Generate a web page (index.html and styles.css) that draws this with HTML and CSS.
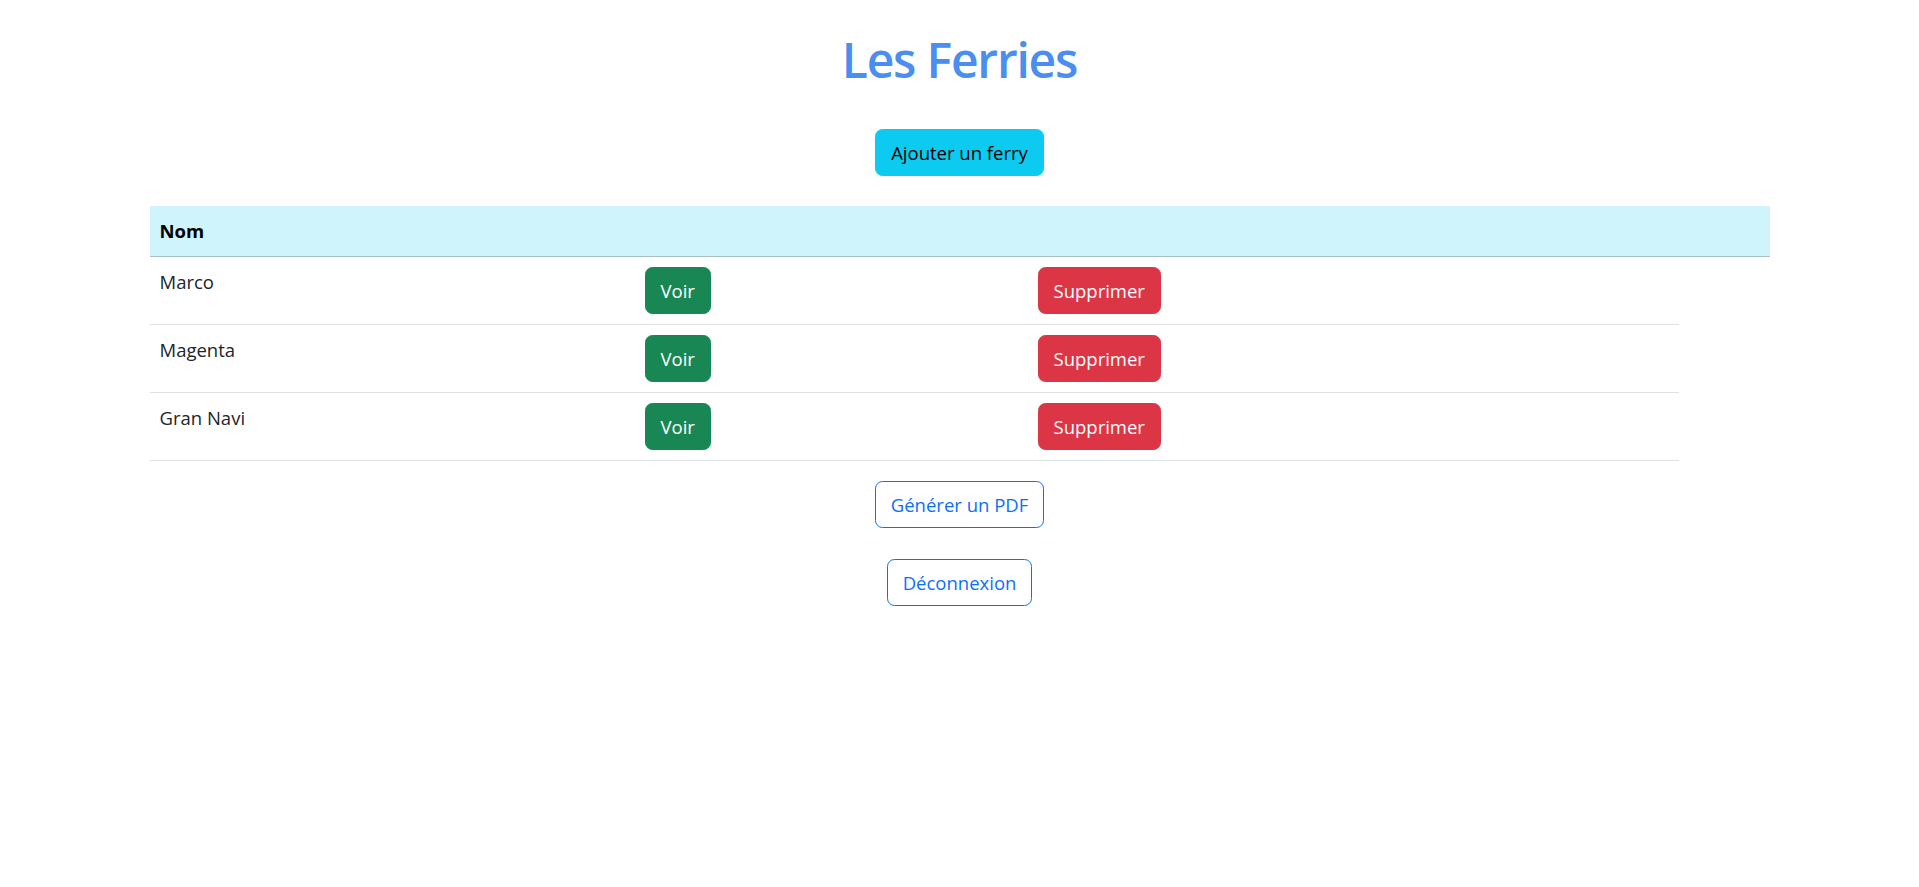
FILE: index.html
```html
<!DOCTYPE html>
<html lang="fr">
<head>
<meta charset="utf-8">
<title>Les Ferries</title>
<link rel="stylesheet" href="styles.css">
</head>
<body>
<div class="container">
  <h1 class="title">Les Ferries</h1>
  <div class="center add-row">
    <a class="btn btn-info" href="#">Ajouter un ferry</a>
  </div>
  <table class="table">
    <colgroup>
      <col class="c1"><col class="c2"><col class="c3"><col class="c4">
    </colgroup>
    <thead>
      <tr><th>Nom</th><th></th><th></th><th></th></tr>
    </thead>
    <tbody>
      <tr>
        <td>Marco</td>
        <td><a class="btn btn-success" href="#">Voir</a></td>
        <td><a class="btn btn-danger" href="#">Supprimer</a></td>
      </tr>
      <tr>
        <td>Magenta</td>
        <td><a class="btn btn-success" href="#">Voir</a></td>
        <td><a class="btn btn-danger" href="#">Supprimer</a></td>
      </tr>
      <tr>
        <td>Gran Navi</td>
        <td><a class="btn btn-success" href="#">Voir</a></td>
        <td><a class="btn btn-danger" href="#">Supprimer</a></td>
      </tr>
    </tbody>
  </table>
  <div class="center pdf-row">
    <a class="btn btn-outline" href="#">Générer un PDF</a>
  </div>
  <div class="center logout-row">
    <a class="btn btn-outline" href="#">Déconnexion</a>
  </div>
</div>
</body>
</html>
```

FILE: styles.css
```css
* { box-sizing: border-box; }
body {
  margin: 0;
  font-family: "Open Sans", "Noto Sans", sans-serif;
  font-size: 18.5px;
  line-height: 30px;
  color: #212529;
  background: #fff;
}
.container {
  width: 1650px;
  margin: 0 auto;
  padding: 0 15px;
}
.title {
  margin: 0;
  padding-top: 30px;
  text-align: center;
  font-size: 48px;
  letter-spacing: -1.2px;
  line-height: 60px;
  font-weight: 600;
  color: #4a8fef;
}
.center { text-align: center; }
.add-row { margin-top: 39px; margin-bottom: 30px; }
.pdf-row { margin-top: 0; }
.logout-row { margin-top: 31px; }
.btn {
  display: inline-block;
  vertical-align: top;
  padding: 7.5px 15px;
  border: 1px solid transparent;
  border-radius: 7.5px;
  text-decoration: none;
  font-size: 18.5px;
  line-height: 30px;
}
.btn-info { background: #0dcaf0; border-color: #0dcaf0; color: #000; }
.btn-success { background: #198754; border-color: #198754; color: #fff; }
.btn-danger { background: #dc3545; border-color: #dc3545; color: #fff; }
.btn-outline { background: #fff; border-color: #0d6efd; color: #0d6efd; }
.table {
  width: 1620px;
  table-layout: fixed;
  border-collapse: collapse;
  margin-bottom: 20px;
}
.c1 { width: 485px; }
.c2 { width: 393px; }
.c3 { width: 651px; }
.c4 { width: 91px; }
.table th, .table td {
  padding: 10px;
  text-align: left;
  vertical-align: top;
  border-bottom: 1px solid #dee2e6;
}
.table th {
  background: #cff4fc;
  font-weight: 700;
  color: #000;
  border-bottom-color: #a6bfc4;
}
```
